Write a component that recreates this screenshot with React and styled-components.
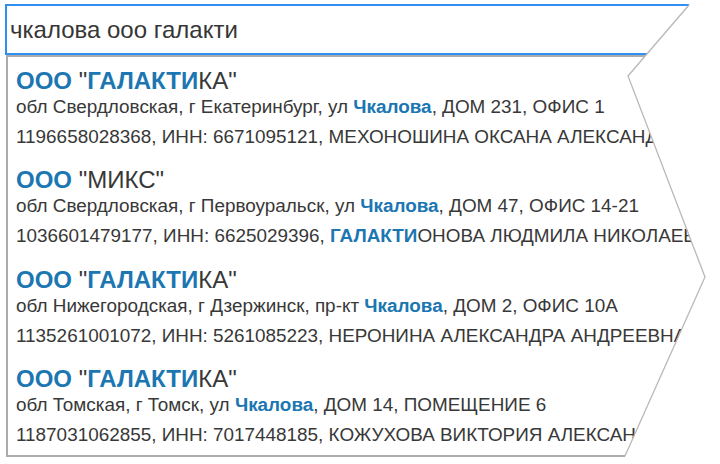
import React from "react";
import styled, { createGlobalStyle } from "styled-components";

const Global = createGlobalStyle`
  html, body { margin: 0; padding: 0; background: #fff; }
  body { font-family: "Liberation Sans", Arial, sans-serif; }
`;

const Stage = styled.div`
  position: relative;
  width: 720px;
  height: 464px;
  overflow: hidden;
  background: #fff;
`;

const Torn = styled.div`
  display: flex;
  flex-direction: column;
  padding: 4px 0 0 5px;
  height: 464px;
  box-sizing: border-box;
  clip-path: polygon(0 0, 693px 0, 628px 76px, 705px 277px, 624px 459px, 0 459px);
`;

const SearchInput = styled.div`
  box-sizing: border-box;
  width: 760px;
  height: 51px;
  border: 2px solid #2f8ff2;
  padding: 0 3px;
  display: flex;
  align-items: center;
  font-size: 24px;
  color: #363636;
  background: #fff;
`;

const Dropdown = styled.div`
  box-sizing: border-box;
  width: 760px;
  margin-left: 1px;
  border: 2px solid #acacac;
  border-right: none;
  height: 402px;
  padding: 11px 0 0 8px;
  display: flex;
  flex-direction: column;
`;

const Item = styled.div`
  display: flex;
  flex-direction: column;
  flex: 0 0 99.3px;
  white-space: nowrap;
  color: #383838;
`;

const Title = styled.div`
  font-size: 24px;
  line-height: 26px;
`;

const Line = styled.div`
  font-size: 18.9px;
  line-height: ${(p) => p.$lh}px;
  margin-top: ${(p) => p.$gap || 0}px;
`;

const Hl = styled.b`
  color: #1b76b2;
  font-weight: bold;
`;

const Edge = styled.svg`
  position: absolute;
  left: 0;
  top: 0;
  pointer-events: none;
`;

const items = [
  {
    title: [["ООО", 1], [' "', 0], ["ГАЛАКТИ", 1], ['КА"', 0]],
    addr: [["обл Свердловская, г Екатеринбург, ул ", 0], ["Чкалова", 1], [", ДОМ 231, ОФИС 1", 0]],
    info: [["1196658028368, ИНН: 6671095121, МЕХОНОШИНА ОКСАНА АЛЕКСАНДРОВНА", 0]],
  },
  {
    title: [["ООО", 1], [' "МИКС"', 0]],
    addr: [["обл Свердловская, г Первоуральск, ул ", 0], ["Чкалова", 1], [", ДОМ 47, ОФИС 14-21", 0]],
    info: [["1036601479177, ИНН: 6625029396, ", 0], ["ГАЛАКТИ", 1], ["ОНОВА ЛЮДМИЛА НИКОЛАЕВНА", 0]],
  },
  {
    title: [["ООО", 1], [' "', 0], ["ГАЛАКТИ", 1], ['КА"', 0]],
    addr: [["обл Нижегородская, г Дзержинск, пр-кт ", 0], ["Чкалова", 1], [", ДОМ 2, ОФИС 10А", 0]],
    info: [["1135261001072, ИНН: 5261085223, НЕРОНИНА АЛЕКСАНДРА АНДРЕЕВНА", 0]],
  },
  {
    title: [["ООО", 1], [' "', 0], ["ГАЛАКТИ", 1], ['КА"', 0]],
    addr: [["обл Томская, г Томск, ул ", 0], ["Чкалова", 1], [", ДОМ 14, ПОМЕЩЕНИЕ 6", 0]],
    info: [["1187031062855, ИНН: 7017448185, КОЖУХОВА ВИКТОРИЯ АЛЕКСАНДРОВНА", 0]],
  },
];

const Parts = ({ parts }) =>
  parts.map(([t, h], i) => (h ? <Hl key={i}>{t}</Hl> : <React.Fragment key={i}>{t}</React.Fragment>));

export default function App() {
  return (
    <>
      <Global />
      <Stage>
        <Torn>
          <SearchInput>чкалова ооо галакти</SearchInput>
          <Dropdown>
            {items.map((it, i) => (
              <Item key={i}>
                <Title><Parts parts={it.title} /></Title>
                <Line $lh={25}><Parts parts={it.addr} /></Line>
                <Line $lh={26} $gap={5}><Parts parts={it.info} /></Line>
              </Item>
            ))}
          </Dropdown>
        </Torn>
        <Edge width="720" height="464" viewBox="0 0 720 464">
          <polyline
            points="689,5 628,76 705,277 625,456"
            fill="none"
            stroke="#b8b8b8"
            strokeWidth="1.3"
          />
        </Edge>
      </Stage>
    </>
  );
}
